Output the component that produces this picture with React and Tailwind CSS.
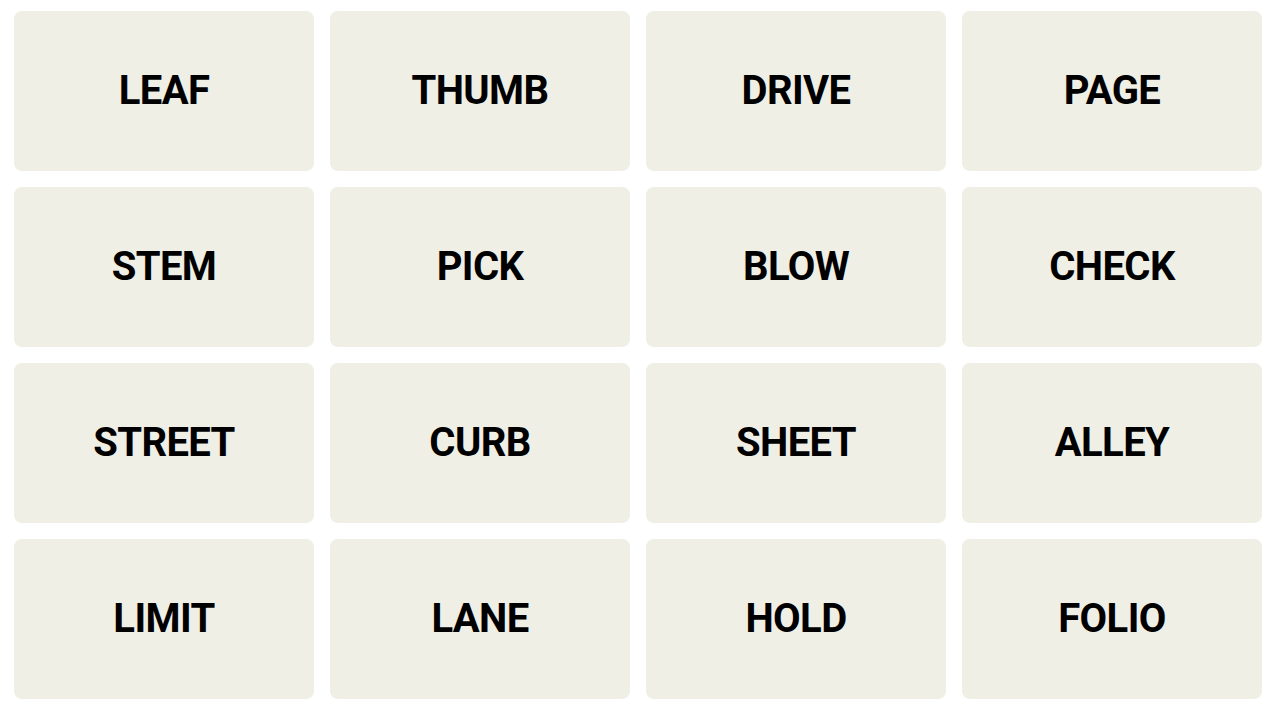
const words = [
  'LEAF', 'THUMB', 'DRIVE', 'PAGE',
  'STEM', 'PICK', 'BLOW', 'CHECK',
  'STREET', 'CURB', 'SHEET', 'ALLEY',
  'LIMIT', 'LANE', 'HOLD', 'FOLIO',
];

export default function App() {
  return (
    <div className="w-[1273px] h-[709px] bg-white pt-[11px] pl-[14px]">
      <div className="grid grid-cols-[repeat(4,300px)] auto-rows-[160px] gap-4">
        {words.map((w) => (
          <div
            key={w}
            className="flex items-center justify-center rounded-lg bg-[#efefe6] text-black font-bold text-[40px] tracking-[-0.6px] font-['Roboto',sans-serif] select-none"
          >
            {w}
          </div>
        ))}
      </div>
    </div>
  );
}
